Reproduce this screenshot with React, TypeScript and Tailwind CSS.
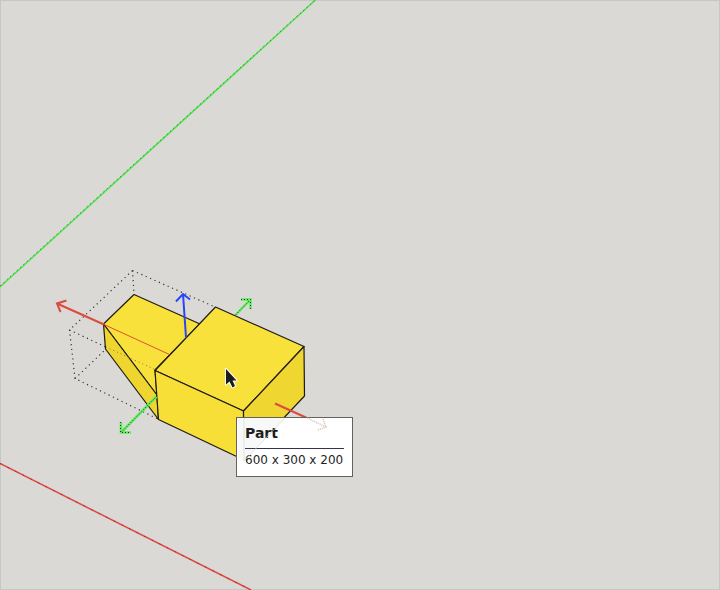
const part = {
  name: "Part",
  size: "600 x 300 x 200",
};

const Axes = () => (
  <g fill="none" strokeWidth={1.5}>
    <path d="M0 287 315.500 0" stroke="#4be84b" />
    <path
      d="M0 286 315 0"
      stroke="#3d5a3d"
      strokeWidth={0.7}
      strokeDasharray="1.5 3"
    />
    <path d="M0 463.500 251 590" stroke="#e0483f" />
    <path
      d="M0 463.500 251 590"
      stroke="#5a3030"
      strokeWidth={0.7}
      strokeDasharray="1.5 7"
    />
  </g>
);

const Bounds = () => (
  <path
    d="M132.500 270.500 69.500 330 75 378.500 158 419M132.500 270.500 215 307M132.500 270.500 134 294M69.500 330 155 370M75 378.500 105 350"
    fill="none"
    stroke="#35352f"
    strokeWidth={1.2}
    strokeDasharray="1.2 3.6"
  />
);

const Solid = () => (
  <g stroke="#1d1b18" strokeWidth={1.2} strokeLinejoin="round">
    <path d="M103.500 324 134 294.500 200 324 155 370 157 395Z" fill="#f8e13b" />
    <path d="M103.500 324 157 395 158.500 419.500 105.500 349Z" fill="#eed530" />
    <path d="M215.500 307 304 346.500 243.500 411 155 370.500Z" fill="#f8e13b" />
    <path d="M155 370.500 243.500 411 244 460 158.500 419.500Z" fill="#f7df38" />
    <path d="M304 346.500 304.500 396 244 460 243.500 411Z" fill="#efd630" />
  </g>
);

const Handles = () => (
  <g fill="none" strokeWidth={2}>
    <path d="M104 324.500 57 303.500M66.500 300.500 57 303.500 60.500 312" stroke="#dd4a40" />
    <path d="M104 324.500 169.500 354.500" stroke="#e25030" strokeWidth={1} />
    <path
      d="M106 347 155 369.500"
      stroke="#8c7d28"
      strokeWidth={1}
      strokeDasharray="1 3"
    />
    <path d="M275 403.500 307 418" stroke="#dd4a40" />
    <path d="M186 337.500 183 294M176 301.500 183 294 190 299.500" stroke="#2746fa" />
    <g stroke="#5cec5c" strokeWidth={2.5}>
      <path d="M235.500 315 250.500 299.500M241 299.500H250.500V309" />
      <path d="M156.500 396.500 121 432.500M121 422V432.500H131" />
    </g>
    <g stroke="#1d421d" strokeWidth={1} strokeDasharray="1 2">
      <path d="M235.500 315 250.500 299.500M241 299.500H250.500V309" />
      <path d="M156.500 396.500 121 432.500M120.500 422V432.500H131" />
    </g>
  </g>
);

const Pointer = () => (
  <path
    d="M226 369V384.500L229.500 381.500 232.500 387.500 235 386 232.500 380.500H236.500Z"
    fill="#1c1c1c"
    stroke="#fff"
    strokeWidth={2}
    strokeLinejoin="round"
    paintOrder="stroke"
  />
);

const Tooltip = () => (
  <div
    role="tooltip"
    className="absolute left-[236px] top-[417px] min-w-[117px] border border-[#62645b] bg-white px-2 pt-1 pb-2 text-[#242424]"
  >
    <p className="border-b border-[#33334d] pb-1 text-sm leading-[22px] font-bold text-[#191919]">
      {part.name}
    </p>
    <p className="pt-[3px] text-xs leading-4 whitespace-nowrap">{part.size}</p>
  </div>
);

export default function App() {
  return (
    <main className="relative min-h-screen overflow-hidden bg-[#dad9d5] font-['DejaVu_Sans',sans-serif] outline outline-1 -outline-offset-1 outline-[#c6c6c3]">
      <svg
        width="720"
        height="590"
        viewBox="0 0 720 590"
        className="absolute top-0 left-0"
        role="img"
        aria-label="3D view of the selected part"
      >
        <Axes />
        <Bounds />
        <Solid />
        <Handles />
        <Pointer />
      </svg>
      <Tooltip />
      {/* hidden edges showing faintly through the label */}
      <svg
        width="720"
        height="590"
        viewBox="0 0 720 590"
        className="pointer-events-none absolute top-0 left-0"
        aria-hidden="true"
      >
        <path d="M238 418H285L244 461 238 458Z" fill="#888" opacity={0.06} />
        <g fill="none" strokeWidth={1}>
          <path d="M285 418 244 461V418" stroke="#cfe3cb" opacity={0.7} />
          <path
            d="M307 418 326 427M318 430 326 427 323 419"
            stroke="#d9bcb6"
            strokeWidth={1.5}
            strokeDasharray="1 1"
          />
        </g>
      </svg>
    </main>
  );
}
